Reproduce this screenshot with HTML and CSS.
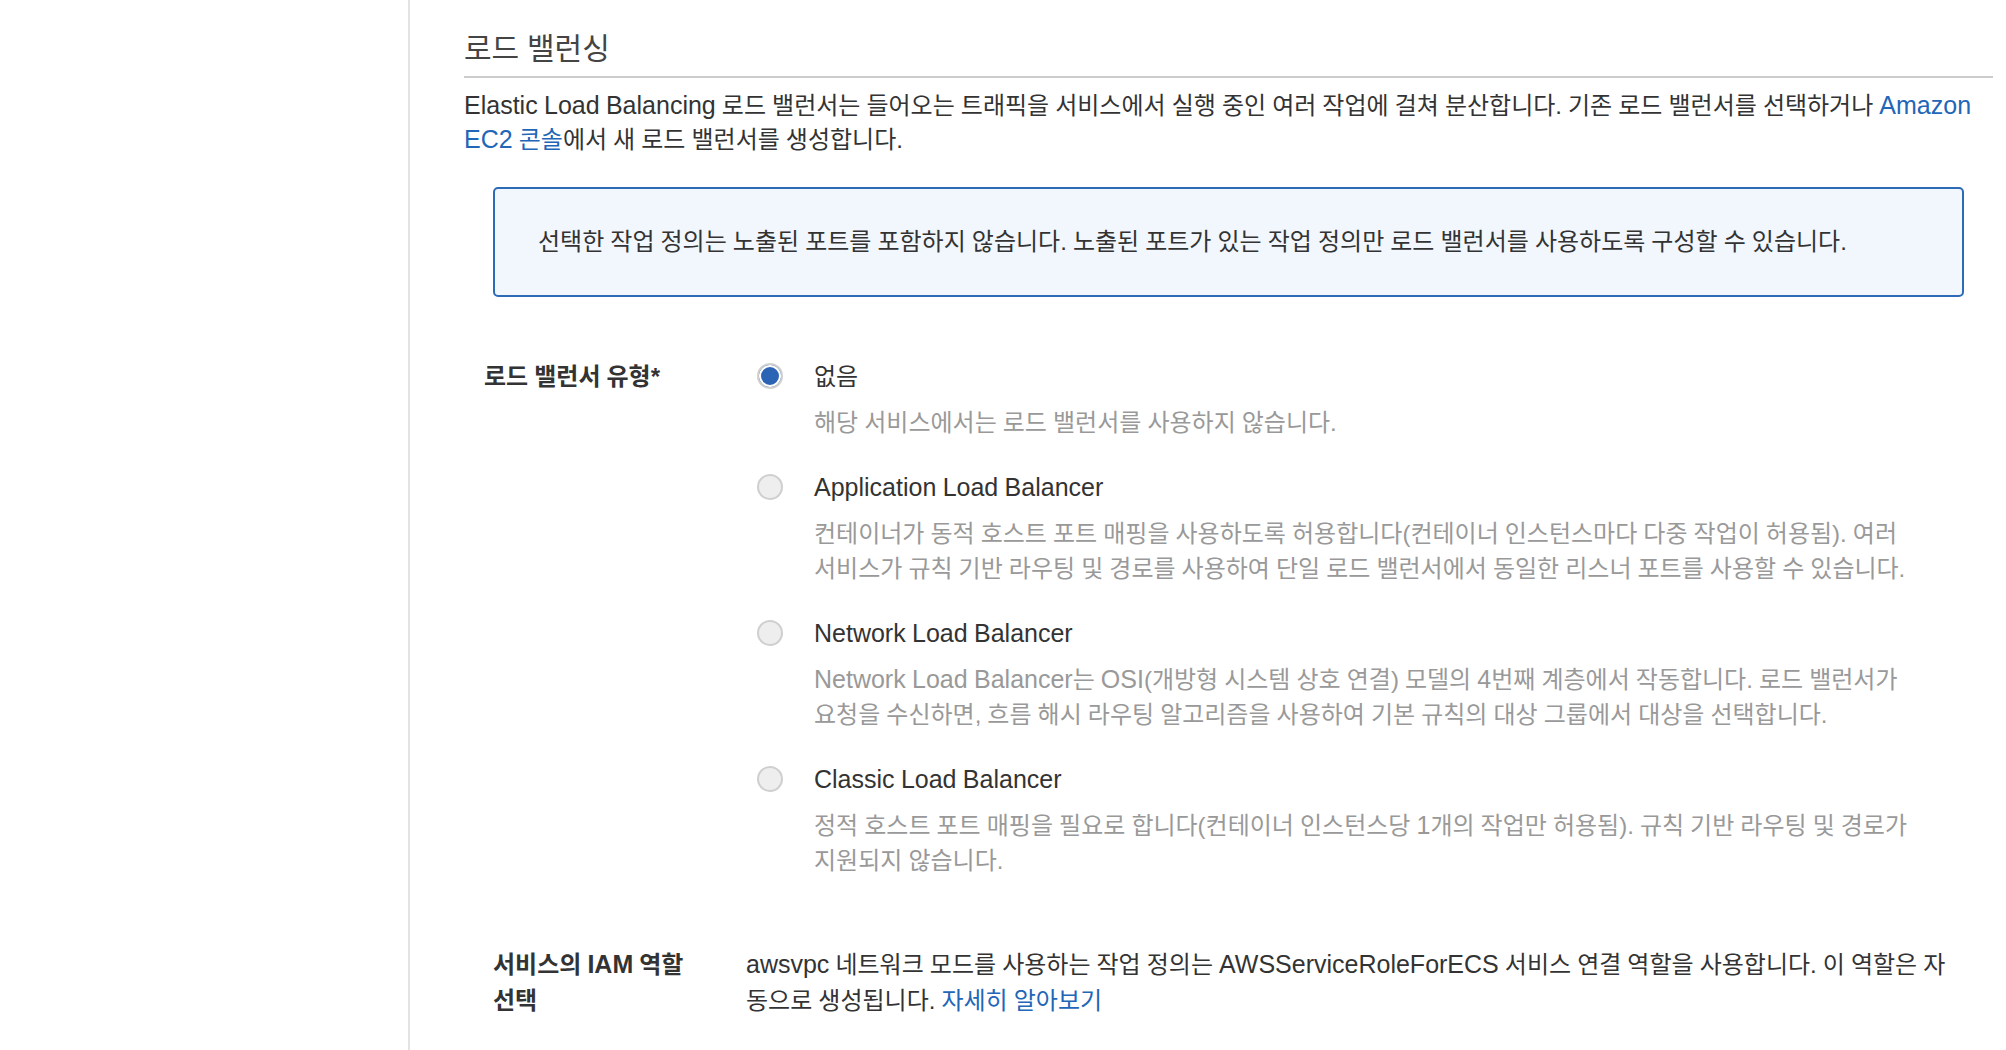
FILE: index.html
```html
<!DOCTYPE html>
<html lang="ko">
<head>
    <meta charset="UTF-8">
    <meta name="viewport" content="width=device-width, initial-scale=1.0">
    <title>로드 밸런싱</title>
    <link rel="stylesheet" href="styles.css">
</head>
<body>
    <div class="layout">
        <aside class="sidebar"></aside>

        <main class="content">
            <h2 class="section-title">로드 밸런싱</h2>
            <p class="intro"><span class="en">Elastic Load Balancing</span> 로드 밸런서는 들어오는 트래픽을 서비스에서 실행 중인 여러 작업에 걸쳐 분산합니다. 기존 로드 밸런서를 선택하거나 <a href="#"><span class="en">Amazon</span><br><span class="en">EC2</span> 콘솔</a>에서 새 로드 밸런서를 생성합니다.</p>

            <div class="notice">선택한 작업 정의는 노출된 포트를 포함하지 않습니다. 노출된 포트가 있는 작업 정의만 로드 밸런서를 사용하도록 구성할 수 있습니다.</div>

            <div class="field">
                <div class="field-label">로드 밸런서 유형*</div>
                <div class="options">
                    <div class="option">
                        <span class="radio checked"></span>
                        <div class="option-body">
                            <div class="option-title">없음</div>
                            <div class="option-desc">해당 서비스에서는 로드 밸런서를 사용하지 않습니다.</div>
                        </div>
                    </div>
                    <div class="option">
                        <span class="radio"></span>
                        <div class="option-body">
                            <div class="option-title"><span class="en">Application Load Balancer</span></div>
                            <div class="option-desc">컨테이너가 동적 호스트 포트 매핑을 사용하도록 허용합니다(컨테이너 인스턴스마다 다중 작업이 허용됨). 여러<br>서비스가 규칙 기반 라우팅 및 경로를 사용하여 단일 로드 밸런서에서 동일한 리스너 포트를 사용할 수 있습니다.</div>
                        </div>
                    </div>
                    <div class="option">
                        <span class="radio"></span>
                        <div class="option-body">
                            <div class="option-title"><span class="en">Network Load Balancer</span></div>
                            <div class="option-desc"><span class="en">Network Load Balancer</span>는 <span class="en">OSI</span>(개방형 시스템 상호 연결) 모델의 <span class="en">4</span>번째 계층에서 작동합니다. 로드 밸런서가<br>요청을 수신하면, 흐름 해시 라우팅 알고리즘을 사용하여 기본 규칙의 대상 그룹에서 대상을 선택합니다.</div>
                        </div>
                    </div>
                    <div class="option">
                        <span class="radio"></span>
                        <div class="option-body">
                            <div class="option-title"><span class="en">Classic Load Balancer</span></div>
                            <div class="option-desc">정적 호스트 포트 매핑을 필요로 합니다(컨테이너 인스턴스당 <span class="en">1</span>개의 작업만 허용됨). 규칙 기반 라우팅 및 경로가<br>지원되지 않습니다.</div>
                        </div>
                    </div>
                </div>
            </div>

            <div class="field iam">
                <div class="field-label">서비스의 <span class="en">IAM</span> 역할<br>선택</div>
                <div class="field-text"><span class="en">awsvpc</span> 네트워크 모드를 사용하는 작업 정의는 <span class="en">AWSServiceRoleForECS</span> 서비스 연결 역할을 사용합니다. 이 역할은 자<br>동으로 생성됩니다. <a href="#">자세히 알아보기</a></div>
            </div>
        </main>
    </div>
</body>
</html>
```

FILE: styles.css
```css
body {
    margin: 0;
    font-family: "Liberation Sans", "Noto Sans CJK KR", sans-serif;
    font-size: 24px;
    word-spacing: -0.6px;
    color: #333;
    background: #fff;
    overflow: hidden;
}
.layout {
    display: flex;
    min-height: 100vh;
}
.sidebar {
    flex: none;
    width: 408px;
    border-right: 2px solid #e3e3e3;
}
.content {
    flex: 1;
    padding: 29px 13px 0 54px;
}
.en {
    font-size: 25px;
    line-height: 1;
}
a {
    color: #2266b8;
    text-decoration: none;
}
.section-title {
    margin: 0;
    font-size: 30px;
    font-weight: normal;
    line-height: 40px;
    color: #444;
    padding-bottom: 7px;
    border-bottom: 2px solid #ccc;
}
.intro {
    margin: 11px 0 0;
    line-height: 34px;
    white-space: nowrap;
}
.notice {
    margin: 30px 29px 0;
    padding: 36px 43px;
    line-height: 34px;
    background: #f1f7fd;
    border: 2px solid #2d6bb6;
    border-radius: 5px;
}
.field {
    display: flex;
    margin-top: 63px;
    padding-left: 20px;
}
.field-label {
    flex: none;
    width: 273px;
    font-weight: bold;
    line-height: 34px;
}
.options {
    display: flex;
    flex-direction: column;
    gap: 30px;
}
.option {
    display: flex;
    align-items: flex-start;
}
.radio {
    flex: none;
    width: 26px;
    height: 26px;
    margin: 3px 31px 0 0;
    box-sizing: border-box;
    border-radius: 50%;
    border: 2px solid #cfcfcf;
    background: #eee;
}
.radio.checked {
    background: #2b64b4;
    box-shadow: inset 0 0 0 2px #fff;
}
.option-title {
    line-height: 34px;
}
.option-desc {
    margin-top: 11px;
    line-height: 35.5px;
    color: #999;
    white-space: nowrap;
}
.field.iam {
    margin-top: 68px;
    padding-left: 29px;
}
.iam .field-label {
    width: 253px;
    line-height: 36px;
}
.field-text {
    line-height: 36px;
    white-space: nowrap;
}
```
